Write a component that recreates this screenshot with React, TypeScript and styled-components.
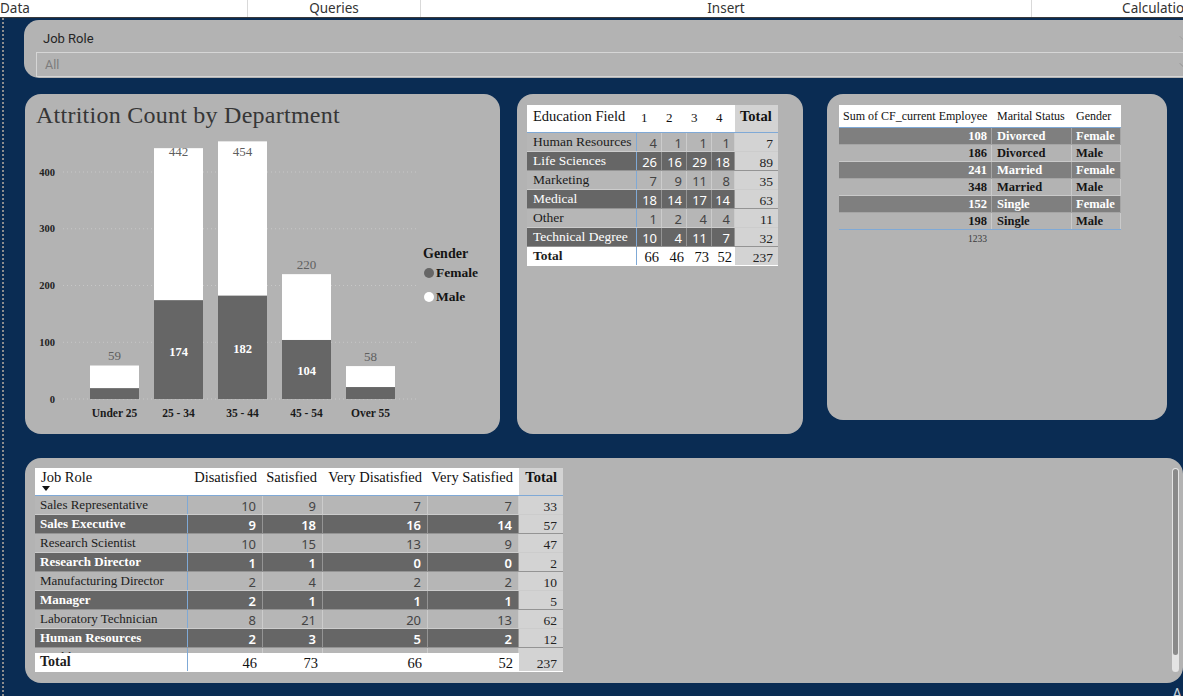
import React from "react";
import styled, { createGlobalStyle } from "styled-components";
import { ChevronDown } from "lucide-react";

const SERIF = `"Liberation Serif", "Times New Roman", serif`;
const SANS = `"Noto Sans", "Open Sans", sans-serif`;
const UI = `Roboto, "Liberation Sans", sans-serif`;

const NAVY = "#0a2c53";
const CARD = "#b3b3b3";
const BLUE = "#7fa9d6";
const DARK = "#666666";
const MARDARK = "#7f7f7f";
const LIGHT = "#b6b6b6";
const TOTALBG = "#d3d3d3";
const SEP = "rgba(255,255,255,0.3)";

const GlobalStyle = createGlobalStyle`
  html, body { margin: 0; padding: 0; background: ${NAVY}; overflow: hidden; }
  *, *::before, *::after { box-sizing: border-box; }
`;

const Page = styled.div`
  position: relative;
  width: 1183px;
  height: 696px;
  overflow: hidden;
  display: flex;
  flex-direction: column;
  background: ${NAVY};
`;

const TopBar = styled.div`
  flex: none;
  height: 18px;
  display: flex;
  background: #fff;
  border-bottom: 1px solid #3b3b3b;
`;

const Tab = styled.div<{ $w: number; $left?: boolean }>`
  flex: none;
  width: ${(p) => p.$w}px;
  height: 17px;
  display: flex;
  align-items: center;
  justify-content: ${(p) => (p.$left ? "flex-start" : "center")};
  border-right: 1px solid #d9d9d9;
  font-family: ${SANS};
  font-size: 13.5px;
  line-height: 17px;
  color: #333;
  white-space: nowrap;
  overflow: hidden;
`;

const Body = styled.div`
  flex: 1;
  display: flex;
  min-height: 0;
`;

const Strip = styled.div`
  flex: none;
  width: 6px;
  display: flex;
  justify-content: center;
  &::before {
    content: "";
    width: 2px;
    height: 100%;
    background: repeating-linear-gradient(to bottom, #8d8d8d 0 2px, transparent 2px 4px);
  }
`;

const Content = styled.div`
  flex: 1;
  display: flex;
  flex-direction: column;
  align-items: flex-start;
  padding: 2px 0 0 19px;
  min-width: 0;
`;

const Slicer = styled.section`
  flex: none;
  width: 1190px;
  height: 58px;
  margin-left: -1px;
  background: ${CARD};
  border-radius: 15px;
  display: flex;
  flex-direction: column;
  padding: 10px 0 0 12px;
`;

const SlicerHead = styled.div`
  display: flex;
  align-items: center;
  justify-content: space-between;
  height: 16px;
  padding: 0 25px 0 7px;
  font-family: ${UI};
  font-size: 13px;
  color: #252525;
`;

const SlicerBox = styled.div`
  margin-top: 6px;
  height: 25px;
  display: flex;
  align-items: center;
  justify-content: space-between;
  border: 1px solid #d6d6d6;
  border-right: none;
  padding: 0 25px 0 8px;
  font-family: ${UI};
  font-size: 12.5px;
  color: #7c7c7c;
`;

const CardRow = styled.div`
  flex: none;
  display: flex;
  align-items: flex-start;
  margin-top: 16px;
`;

const Card = styled.section<{ $w: number; $h: number; $ml?: number }>`
  flex: none;
  width: ${(p) => p.$w}px;
  height: ${(p) => p.$h}px;
  margin-left: ${(p) => p.$ml ?? 0}px;
  background: ${CARD};
  border-radius: 16px;
  overflow: hidden;
`;

const ChartCard = styled(Card)`
  display: flex;
  flex-direction: column;
`;

const TableCard = styled(Card)<{ $pad: string }>`
  padding: ${(p) => p.$pad};
`;

const ChartTitle = styled.h2`
  margin: 0;
  padding: 7px 0 0 11px;
  height: 35px;
  font-family: ${SERIF};
  font-weight: 400;
  font-size: 24px;
  letter-spacing: 0.25px;
  line-height: 28px;
  color: #363636;
  white-space: nowrap;
`;

const ChartRow = styled.div`
  display: flex;
  height: 305px;
`;

const Legend = styled.div`
  display: flex;
  flex-direction: column;
  padding: 116px 0 0 3px;
  font-family: ${SERIF};
  color: #141414;
`;

const LegendTitle = styled.div`
  font-size: 14px;
  font-weight: 700;
  line-height: 18px;
`;

const LegendItem = styled.div<{ $mt: number }>`
  display: flex;
  align-items: center;
  gap: 2px;
  margin-top: ${(p) => p.$mt}px;
  margin-left: 1px;
  font-size: 13.5px;
  font-weight: 700;
  line-height: 18px;
`;

const Dot = styled.span<{ $c: string }>`
  width: 10px;
  height: 10px;
  border-radius: 50%;
  background: ${(p) => p.$c};
`;

/* ---------- tables ---------- */

const Table = styled.div<{ $w: number }>`
  display: flex;
  flex-direction: column;
  width: ${(p) => p.$w}px;
`;

const HeadRow = styled.div<{ $h: number }>`
  flex: none;
  display: flex;
  height: ${(p) => p.$h}px;
  background: #fff;
  border-bottom: 1px solid ${BLUE};
`;

const HeadCell = styled.div<{
  $w: number;
  $pl?: number;
  $pr?: number;
  $pt?: number;
  $right?: boolean;
  $bg?: string;
  $bold?: boolean;
  $size?: number;
}>`
  flex: none;
  width: ${(p) => p.$w}px;
  padding: ${(p) => p.$pt ?? 2}px ${(p) => p.$pr ?? 0}px 0 ${(p) => p.$pl ?? 0}px;
  display: flex;
  flex-direction: column;
  align-items: ${(p) => (p.$right ? "flex-end" : "flex-start")};
  background: ${(p) => p.$bg ?? "transparent"};
  font-family: ${SERIF};
  font-size: ${(p) => p.$size ?? 14.5}px;
  font-weight: ${(p) => (p.$bold ? 700 : 400)};
  line-height: 18px;
  color: #111;
  white-space: nowrap;
`;

const SortArrow = styled.span`
  width: 0;
  height: 0;
  margin-left: 1px;
  border-left: 4px solid transparent;
  border-right: 4px solid transparent;
  border-top: 5px solid #111;
`;

const TRow = styled.div<{ $h: number; $bg: string; $line?: string }>`
  flex: none;
  display: flex;
  height: ${(p) => p.$h}px;
  background: ${(p) => p.$bg};
  border-bottom: 1px solid ${(p) => p.$line ?? SEP};
`;

const NameCell = styled.div<{
  $w: number;
  $pl: number;
  $dark?: boolean;
  $bold?: boolean;
  $size?: number;
}>`
  flex: none;
  width: ${(p) => p.$w}px;
  padding-left: ${(p) => p.$pl}px;
  display: flex;
  align-items: center;
  border-right: 1px solid ${BLUE};
  font-family: ${SERIF};
  font-size: ${(p) => p.$size ?? 13.5}px;
  font-weight: ${(p) => (p.$bold ? 700 : 400)};
  line-height: 16px;
  color: ${(p) => (p.$dark ? "#fff" : "#1c1c1c")};
  white-space: nowrap;
  overflow: hidden;
`;

const NumCell = styled.div<{ $w: number; $pr: number; $dark?: boolean; $strong?: boolean }>`
  flex: none;
  width: ${(p) => p.$w}px;
  padding: 2px ${(p) => p.$pr}px 0 0;
  display: flex;
  align-items: center;
  justify-content: flex-end;
  border-right: 1px solid ${SEP};
  font-family: ${SANS};
  font-size: 13px;
  line-height: 15px;
  font-weight: ${(p) => (p.$strong ? 600 : 400)};
  color: ${(p) => (p.$dark ? "#fff" : "#444")};
  white-space: nowrap;
`;

const SumCell = styled.div<{ $w: number; $pr: number }>`
  flex: none;
  width: ${(p) => p.$w}px;
  padding: 2px ${(p) => p.$pr}px 0 0;
  display: flex;
  align-items: center;
  justify-content: flex-end;
  font-family: ${SERIF};
  font-size: 14.5px;
  line-height: 16px;
  color: #111;
  white-space: nowrap;
`;

const TotCell = styled.div<{ $w: number; $pr: number }>`
  flex: none;
  width: ${(p) => p.$w}px;
  padding: 3px ${(p) => p.$pr}px 0 0;
  display: flex;
  align-items: center;
  justify-content: flex-end;
  background: ${TOTALBG};
  font-family: ${SERIF};
  font-size: 13.5px;
  line-height: 15px;
  color: #222;
  white-space: nowrap;
`;

const MarCell = styled.div<{ $w: number; $pl?: number; $pr?: number; $right?: boolean; $dark?: boolean }>`
  flex: none;
  width: ${(p) => p.$w}px;
  padding: 0 ${(p) => p.$pr ?? 0}px 0 ${(p) => p.$pl ?? 0}px;
  display: flex;
  align-items: center;
  justify-content: ${(p) => (p.$right ? "flex-end" : "flex-start")};
  border-right: 1px solid ${SEP};
  font-family: ${SERIF};
  font-size: 12.5px;
  line-height: 15px;
  font-weight: 700;
  color: ${(p) => (p.$dark ? "#fff" : "#151515")};
  white-space: nowrap;
`;

const MarTotal = styled.div`
  width: 153px;
  padding-right: 5px;
  margin-top: 3px;
  text-align: right;
  font-family: ${SERIF};
  font-size: 9.5px;
  line-height: 12px;
  color: #3a3a3a;
`;

const BottomCard = styled(Card)`
  display: flex;
  justify-content: space-between;
  align-items: flex-start;
  margin-top: 24px;
  padding: 10px 4px 0 10px;
`;

const BodyClip = styled.div`
  flex: none;
  height: 157px;
  overflow: hidden;
  display: flex;
  flex-direction: column;
`;

const ScrollTrack = styled.div`
  flex: none;
  width: 7px;
  height: 204px;
  border-radius: 4px;
  background: #e4e4e4;
  padding: 1px;
`;

const ScrollThumb = styled.div`
  height: 186px;
  border-radius: 3px;
  background: #8a8a8a;
`;

const CornerGlyph = styled.span`
  position: absolute;
  left: 1172px;
  top: 684px;
  font-family: ${SANS};
  font-size: 16px;
  line-height: 20px;
  color: #c5cfd9;
`;

/* ---------- chart ---------- */

const groups = [
  { label: "Under 25", total: 59, female: 19 },
  { label: "25 - 34", total: 442, female: 174 },
  { label: "35 - 44", total: 454, female: 182 },
  { label: "45 - 54", total: 220, female: 104 },
  { label: "Over 55", total: 58, female: 21 },
];

const Y0 = 270;
const K = 0.5675;

function AttritionChart() {
  return (
    <svg width={395} height={305} viewBox="0 0 395 305">
      {[0, 100, 200, 300, 400].map((v) => {
        const y = Y0 - v * K;
        return (
          <g key={v}>
            <line x1={38} x2={392} y1={y} y2={y} stroke="#c7c7c7" strokeDasharray="1 3" />
            <text
              x={30}
              y={y}
              textAnchor="end"
              dominantBaseline="central"
              fontFamily={SERIF}
              fontSize={10.5}
              fontWeight={700}
              fill="#222"
            >
              {v}
            </text>
          </g>
        );
      })}
      {groups.map((g, i) => {
        const x = 65 + i * 64;
        const top = Y0 - g.total * K;
        const fTop = Y0 - g.female * K;
        const cx = x + 24.5;
        return (
          <g key={g.label}>
            <rect x={x} y={top} width={49} height={fTop - top} fill="#fff" />
            <rect x={x} y={fTop} width={49} height={Y0 - fTop} fill="#666" />
            <text
              x={cx}
              y={Math.max(top - 10, 22)}
              textAnchor="middle"
              dominantBaseline="central"
              fontFamily={SERIF}
              fontSize={13}
              fill="#5f5f5f"
            >
              {g.total}
            </text>
            {g.female >= 50 && (
              <text
                x={cx}
                y={(fTop + Y0) / 2 + 2}
                textAnchor="middle"
                dominantBaseline="central"
                fontFamily={SERIF}
                fontSize={12.5}
                fontWeight={700}
                fill="#fff"
              >
                {g.female}
              </text>
            )}
            <text
              x={cx}
              y={284}
              textAnchor="middle"
              dominantBaseline="central"
              fontFamily={SERIF}
              fontSize={11.5}
              fontWeight={700}
              fill="#1a1a1a"
            >
              {g.label}
            </text>
          </g>
        );
      })}
    </svg>
  );
}

/* ---------- data ---------- */

const eduRows = [
  { name: "Human Resources", v: [4, 1, 1, 1], t: 7 },
  { name: "Life Sciences", v: [26, 16, 29, 18], t: 89 },
  { name: "Marketing", v: [7, 9, 11, 8], t: 35 },
  { name: "Medical", v: [18, 14, 17, 14], t: 63 },
  { name: "Other", v: [1, 2, 4, 4], t: 11 },
  { name: "Technical Degree", v: [10, 4, 11, 7], t: 32 },
];
const eduW = [25, 25, 25, 23];

const marRows = [
  { n: 108, s: "Divorced", g: "Female" },
  { n: 186, s: "Divorced", g: "Male" },
  { n: 241, s: "Married", g: "Female" },
  { n: 348, s: "Married", g: "Male" },
  { n: 152, s: "Single", g: "Female" },
  { n: 198, s: "Single", g: "Male" },
];

const jobRows = [
  { name: "Sales Representative", v: [10, 9, 7, 7], t: 33 },
  { name: "Sales Executive", v: [9, 18, 16, 14], t: 57 },
  { name: "Research Scientist", v: [10, 15, 13, 9], t: 47 },
  { name: "Research Director", v: [1, 1, 0, 0], t: 2 },
  { name: "Manufacturing Director", v: [2, 4, 2, 2], t: 10 },
  { name: "Manager", v: [2, 1, 1, 1], t: 5 },
  { name: "Laboratory Technician", v: [8, 21, 20, 13], t: 62 },
  { name: "Human Resources", v: [2, 3, 5, 2], t: 12 },
  { name: "Healthcare Representative", v: [2, 1, 2, 4], t: 9 },
];
const jobCols = ["Disatisfied", "Satisfied", "Very Disatisfied", "Very Satisfied"];
const jobW = [75, 60, 105, 91];
const jobTotals = [46, 73, 66, 52];
const jobSumPr = [6, 5, 6, 6];

export default function App() {
  return (
    <Page>
      <GlobalStyle />
      <TopBar>
        <Tab $w={248} $left>Data</Tab>
        <Tab $w={173}>Queries</Tab>
        <Tab $w={611}>Insert</Tab>
        <Tab $w={258}>Calculations</Tab>
      </TopBar>
      <Body>
        <Strip />
        <Content>
          <Slicer>
            <SlicerHead>
              <span>Job Role</span>
              <ChevronDown size={12} color="#9a9a9a" strokeWidth={1.5} />
            </SlicerHead>
            <SlicerBox>
              <span>All</span>
              <ChevronDown size={12} color="#8a8a8a" strokeWidth={1.5} />
            </SlicerBox>
          </Slicer>

          <CardRow>
            <ChartCard $w={475} $h={340}>
              <ChartTitle>Attrition Count by Department</ChartTitle>
              <ChartRow>
                <AttritionChart />
                <Legend>
                  <LegendTitle>Gender</LegendTitle>
                  <LegendItem $mt={1}>
                    <Dot $c="#666" />
                    Female
                  </LegendItem>
                  <LegendItem $mt={6}>
                    <Dot $c="#fff" />
                    Male
                  </LegendItem>
                </Legend>
              </ChartRow>
            </ChartCard>

            <TableCard $w={286} $h={340} $ml={17} $pad="11px 0 0 10px">
              <Table $w={251}>
                <HeadRow $h={28}>
                  <HeadCell $w={110} $pl={6}>Education Field</HeadCell>
                  {["1", "2", "3", "4"].map((c, i) => (
                    <HeadCell key={c} $w={eduW[i]} $pl={4} $pt={4} $size={13}>
                      {c}
                    </HeadCell>
                  ))}
                  <HeadCell $w={43} $pl={5} $bg={TOTALBG} $bold>
                    Total
                  </HeadCell>
                </HeadRow>
                {eduRows.map((r, i) => {
                  const dark = i % 2 === 1;
                  return (
                    <TRow key={r.name} $h={19} $bg={dark ? DARK : LIGHT}>
                      <NameCell $w={110} $pl={6} $dark={dark}>
                        {r.name}
                      </NameCell>
                      {r.v.map((n, j) => (
                        <NumCell key={j} $w={eduW[j]} $pr={4} $dark={dark}>
                          {n}
                        </NumCell>
                      ))}
                      <TotCell $w={43} $pr={5}>{r.t}</TotCell>
                    </TRow>
                  );
                })}
                <TRow $h={19} $bg="#fff" $line="transparent">
                  <NameCell $w={110} $pl={6} $bold>
                    Total
                  </NameCell>
                  {[66, 46, 73, 52].map((n, j) => (
                    <SumCell key={j} $w={eduW[j]} $pr={3}>
                      {n}
                    </SumCell>
                  ))}
                  <TotCell $w={43} $pr={5}>237</TotCell>
                </TRow>
              </Table>
            </TableCard>

            <TableCard $w={340} $h={326} $ml={24} $pad="11px 0 0 12px">
              <Table $w={282}>
                <HeadRow $h={23}>
                  <HeadCell $w={153} $pl={4} $size={12}>Sum of CF_current Employee</HeadCell>
                  <HeadCell $w={80} $pl={5} $size={12}>Marital Status</HeadCell>
                  <HeadCell $w={49} $pl={4} $size={12}>Gender</HeadCell>
                </HeadRow>
                {marRows.map((r, i) => {
                  const dark = i % 2 === 0;
                  return (
                    <TRow
                      key={i}
                      $h={17}
                      $bg={dark ? MARDARK : CARD}
                      $line={i === marRows.length - 1 ? BLUE : SEP}
                    >
                      <MarCell $w={153} $pr={4} $right $dark={dark}>
                        {r.n}
                      </MarCell>
                      <MarCell $w={80} $pl={5} $dark={dark}>
                        {r.s}
                      </MarCell>
                      <MarCell $w={49} $pl={4} $dark={dark}>
                        {r.g}
                      </MarCell>
                    </TRow>
                  );
                })}
                <MarTotal>1233</MarTotal>
              </Table>
            </TableCard>
          </CardRow>

          <BottomCard $w={1158} $h={225}>
            <Table $w={528}>
              <HeadRow $h={28}>
                <HeadCell $w={153} $pl={6} $pt={0}>
                  Job Role
                  <SortArrow />
                </HeadCell>
                {jobCols.map((c, i) => (
                  <HeadCell key={c} $w={jobW[i]} $pr={6} $pt={0} $right>
                    {c}
                  </HeadCell>
                ))}
                <HeadCell $w={44} $pr={6} $pt={0} $right $bg={TOTALBG} $bold>
                  Total
                </HeadCell>
              </HeadRow>
              <BodyClip>
                {jobRows.map((r, i) => {
                  const dark = i % 2 === 1;
                  return (
                    <TRow key={r.name} $h={19} $bg={dark ? DARK : LIGHT}>
                      <NameCell $w={153} $pl={5} $size={13} $dark={dark} $bold={dark}>
                        {r.name}
                      </NameCell>
                      {r.v.map((n, j) => (
                        <NumCell key={j} $w={jobW[j]} $pr={6} $dark={dark} $strong={dark}>
                          {n}
                        </NumCell>
                      ))}
                      <TotCell $w={44} $pr={6}>{r.t}</TotCell>
                    </TRow>
                  );
                })}
              </BodyClip>
              <TRow $h={19} $bg="#fff" $line="transparent">
                <NameCell $w={153} $pl={5} $size={14} $bold>
                  Total
                </NameCell>
                {jobTotals.map((n, j) => (
                  <SumCell key={j} $w={jobW[j]} $pr={jobSumPr[j]}>
                    {n}
                  </SumCell>
                ))}
                <TotCell $w={44} $pr={6}>237</TotCell>
              </TRow>
            </Table>
            <ScrollTrack>
              <ScrollThumb />
            </ScrollTrack>
          </BottomCard>
        </Content>
      </Body>
      <CornerGlyph>A</CornerGlyph>
    </Page>
  );
}
